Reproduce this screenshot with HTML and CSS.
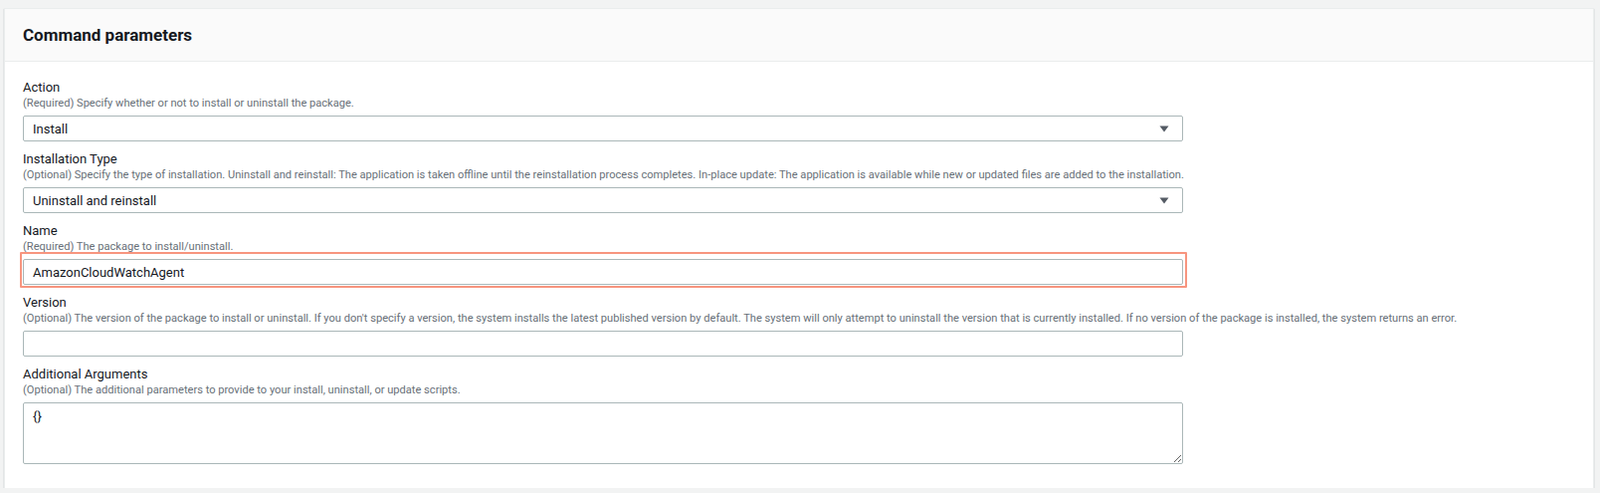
FILE: index.html
```html
<!DOCTYPE html>
<html lang="en">
<head>
<meta charset="utf-8">
<title>Command parameters</title>
<link rel="stylesheet" href="styles.css">
</head>
<body>
<div class="panel">
  <div class="panel-header">
    <h2 class="panel-title">Command parameters</h2>
  </div>
  <div class="panel-body">
    <div class="field">
      <div class="label">Action</div>
      <div class="desc">(Required) Specify whether or not to install or uninstall the package.</div>
      <div class="control select">
        <span>Install</span>
        <svg class="caret" width="10" height="7" viewBox="0 0 10 7"><path d="M0.5 0.5 H9.5 L5 6.5 Z" fill="#545b64"/></svg>
      </div>
    </div>
    <div class="field">
      <div class="label">Installation Type</div>
      <div class="desc">(Optional) Specify the type of installation. Uninstall and reinstall: The application is taken offline until the reinstallation process completes. In-place update: The application is available while new or updated files are added to the installation.</div>
      <div class="control select">
        <span>Uninstall and reinstall</span>
        <svg class="caret" width="10" height="7" viewBox="0 0 10 7"><path d="M0.5 0.5 H9.5 L5 6.5 Z" fill="#545b64"/></svg>
      </div>
    </div>
    <div class="field">
      <div class="label">Name</div>
      <div class="desc">(Required) The package to install/uninstall.</div>
      <div class="highlight-wrap">
        <input class="control input" type="text" value="AmazonCloudWatchAgent">
      </div>
    </div>
    <div class="field">
      <div class="label">Version</div>
      <div class="desc">(Optional) The version of the package to install or uninstall. If you don't specify a version, the system installs the latest published version by default. The system will only attempt to uninstall the version that is currently installed. If no version of the package is installed, the system returns an error.</div>
      <input class="control input" type="text" value="">
    </div>
    <div class="field last">
      <div class="label">Additional Arguments</div>
      <div class="desc">(Optional) The additional parameters to provide to your install, uninstall, or update scripts.</div>
      <textarea class="control textarea">{}</textarea>
    </div>
  </div>
</div>
</body>
</html>
```
FILE: styles.css
```css
* { box-sizing: border-box; }
html, body { margin: 0; padding: 0; }
body {
  background: #f2f3f3;
  padding: 8px 6px 0 4px;
  font-family: Roboto, "Liberation Sans", sans-serif;
  color: #16191f;
}
.panel {
  background: #ffffff;
  border: 1px solid #eaeded;
  border-bottom: none;
  box-shadow: 0 1px 1px 0 rgba(0, 28, 36, 0.35);
}
.panel-header {
  background: #fafafa;
  border-bottom: 1px solid #eaeded;
  padding: 15px 18px;
}
.panel-title {
  margin: 0;
  font-size: 17px;
  line-height: 22px;
  font-weight: 700;
  color: #16191f;
}
.panel-body {
  padding: 18px 18px 24px 18px;
}
.field { margin-bottom: 10px; }
.field.last { margin-bottom: 0; }
.label {
  font-size: 13px;
  line-height: 16px;
  color: #16191f;
}
.label.narrow { letter-spacing: -0.2px; }
.desc {
  font-size: 11.1px;
  line-height: 16px;
  color: #687078;
  white-space: nowrap;
}
.control {
  display: block;
  width: 1166px;
  margin-top: 4px;
  border: 1px solid #aab7b8;
  border-radius: 2px;
  background: #fff;
  font-family: inherit;
  font-size: 13px;
  color: #16191f;
}
.select {
  height: 26px;
  display: flex;
  align-items: center;
  justify-content: space-between;
  padding: 0 13px 0 9px;
}
.caret { display: block; }
.input {
  height: 26px;
  padding: 0 9px;
  outline: none;
}
.textarea {
  height: 62px;
  padding: 4px 9px;
  line-height: 18px;
  resize: vertical;
  outline: none;
}
.highlight-wrap {
  position: relative;
  width: 1166px;
  margin-top: 4px;
}
.highlight-wrap .control { margin-top: 0; }
.highlight-wrap::after {
  content: "";
  position: absolute;
  top: -7px;
  left: -3px;
  right: -4px;
  bottom: -3px;
  border: 2px solid #f7957f;
  border-radius: 1px;
  pointer-events: none;
}
```
